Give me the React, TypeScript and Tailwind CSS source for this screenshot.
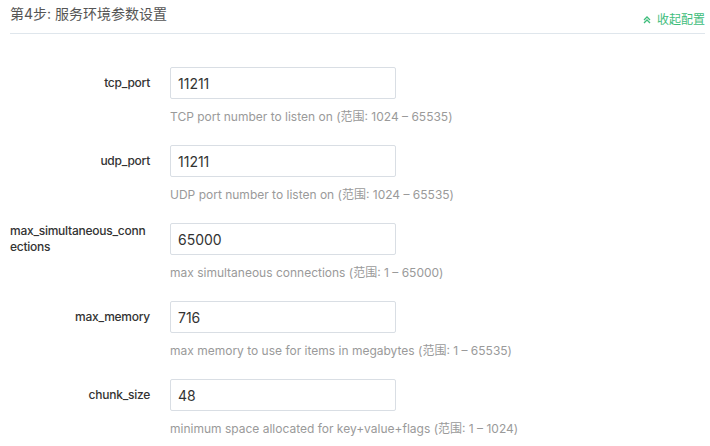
import React from "react";

const rows = [
  { label: "tcp_port", value: "11211", help: "TCP port number to listen on (范围: 1024 – 65535)" },
  { label: "udp_port", value: "11211", help: "UDP port number to listen on (范围: 1024 – 65535)" },
  { label: "max_simultaneous_connections", value: "65000", help: "max simultaneous connections (范围: 1 – 65000)" },
  { label: "max_memory", value: "716", help: "max memory to use for items in megabytes (范围: 1 – 65535)" },
  { label: "chunk_size", value: "48", help: "minimum space allocated for key+value+flags (范围: 1 – 1024)" },
];

export default function App() {
  return (
    <div
      className="w-[710px] h-[446px] bg-white overflow-hidden"
      style={{ fontFamily: 'Inter, "Noto Sans CJK SC", sans-serif' }}
    >
      <div className="mx-[10px] mr-[5px] h-[34px] border-b border-[#dfe6ec] flex justify-between">
        <div className="pt-[4px] text-[14px] leading-[20px] text-[#555]">第4步: 服务环境参数设置</div>
        <div className="pt-[11px] flex items-start text-[12px] leading-[18px] text-[#3ebd7b]">
          <svg width="8" height="8" viewBox="0 0 8 8" className="mt-[5px] mr-[6px]" fill="none" stroke="#3ebd7b" strokeWidth="1.3">
            <path d="M1 4 L4 1 L7 4" />
            <path d="M1 7 L4 4 L7 7" />
          </svg>
          <span>收起配置</span>
        </div>
      </div>
      <div className="pt-[33px] pl-[10px]">
        {rows.map((r) => (
          <div key={r.label} className="h-[78px]">
            <div className="flex items-center">
              <div className="w-[140px] flex justify-end">
                <span className="block text-left text-[12px] leading-[16px] font-medium tracking-[-0.25px] text-[#333] break-all">
                  {r.label}
                </span>
              </div>
              <div className="ml-[20px] w-[226px] h-[32px] border border-[#d9dee4] rounded-[2px] flex items-center pl-[7px] text-[14px] text-[#333]">
                {r.value}
              </div>
            </div>
            <div className="ml-[160px] mt-[10px] text-[12px] leading-[16px] text-[#9a9a9a]">{r.help}</div>
          </div>
        ))}
      </div>
    </div>
  );
}
